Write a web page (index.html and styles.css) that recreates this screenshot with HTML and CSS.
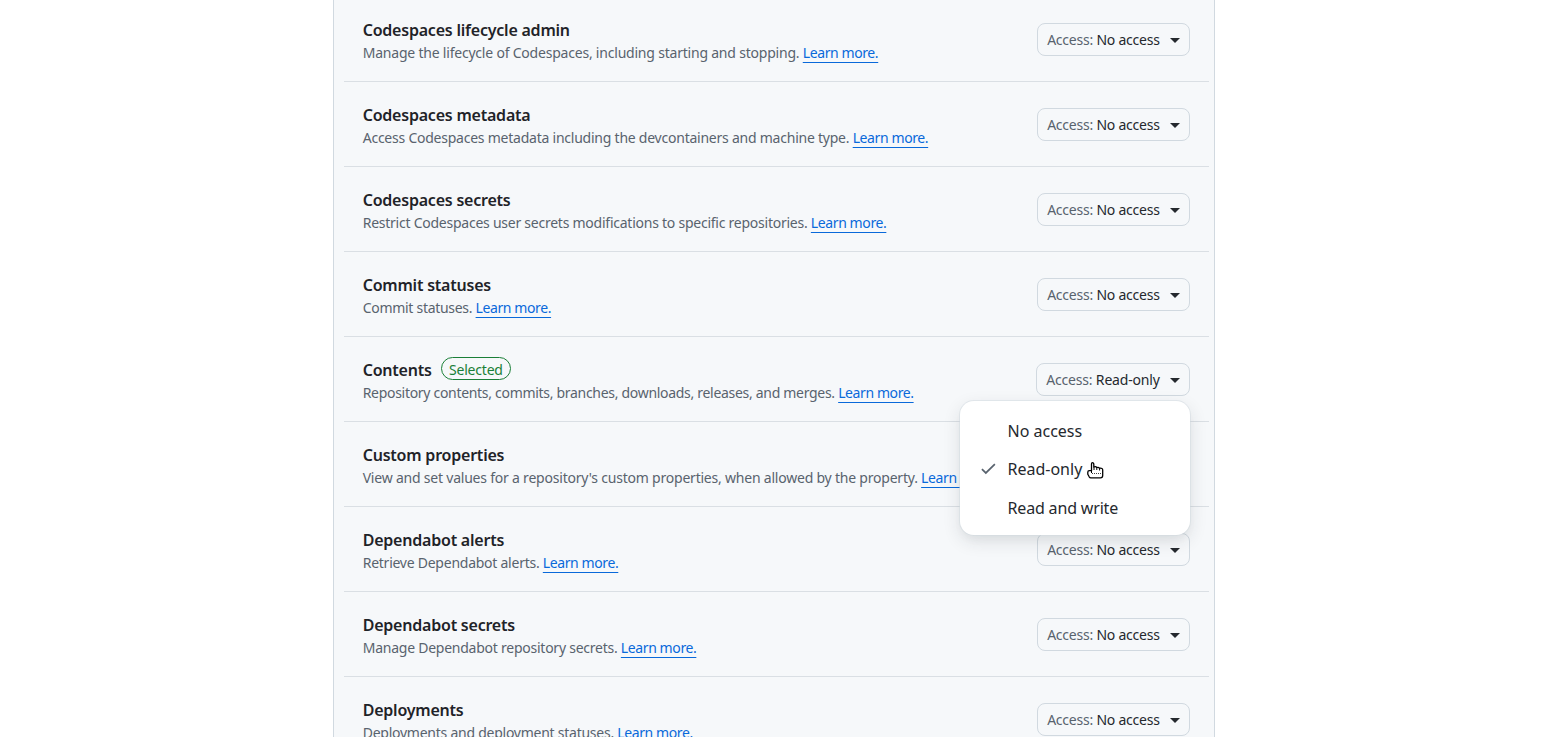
FILE: index.html
```html
<!DOCTYPE html>
<html lang="en">
<head>
<meta charset="utf-8">
<title>Repository permissions</title>
<link rel="stylesheet" href="styles.css">
</head>
<body>
<main class="panel" id="panel"></main>
<script src="app.js"></script>
</body>
</html>
```

FILE: styles.css
```css
* { box-sizing: border-box; }
body { margin: 0; height: 737px; overflow: hidden; background: #fff; color: #1f2328; font-family: "Noto Sans", sans-serif; font-size: 14px; line-height: 21px; }
.panel { width: 882px; height: 737px; margin-left: 333px; padding: 0 5px 0 10px; background: #f6f8fa; border: solid #d1d9e0; border-width: 0 1px; overflow: hidden; }
.row { position: relative; display: flex; justify-content: space-between; height: 85px; padding: 22px 19px 0 18.7px; border-bottom: 1px solid #dadfe4; }
.row:first-child { height: 82px; padding-top: 19px; }
.heading { display: flex; align-items: center; gap: 9.3px; height: 23px; }
.title { font-size: 16px; font-weight: 600; letter-spacing: -0.22px; }
.label { height: 23px; margin-top: -4px; padding: 0 7px; border: 1px solid #1a7f37; border-radius: 12px; color: #1a7f37; letter-spacing: -0.2px; line-height: 23px; }
.description { height: 23px; line-height: 21px; color: #59636e; white-space: nowrap; }
.link { color: #0969da; letter-spacing: -0.4px; text-decoration: underline; text-decoration-thickness: 1px; text-underline-offset: 4px; }
.button { display: flex; align-items: center; height: 33px; margin-top: 4px; padding: 0 9.3px 0 9px; border: 1px solid #d1d9e0; border-radius: 8px; background: #f6f8fa; color: #25292e; letter-spacing: -0.23px; white-space: pre; }
.button-selected { letter-spacing: -0.18px; }
.muted { color: #59636e; }
.caret { margin: 2px 0 0 10px; border: solid transparent; border-width: 5px 5px 0; border-top-color: #25292e; }
.menu { position: absolute; z-index: 2; right: 19px; top: 64px; width: 230px; height: 134px; padding: 11px 8px; border-radius: 14px; background: #fff; color: #25292e; box-shadow: 0 0 0 1px #d1d9e080, 0 6px 12px -3px #25292e0a, 0 6px 18px #25292e1f; }
.option { display: grid; grid-template-columns: 39.5px 1fr; height: 38.4px; align-items: center; font-size: 16px; letter-spacing: 0; }
.option:last-of-type { padding-top: 1px; letter-spacing: -0.17px; }
.check { width: 17px; margin: -2px 0 0 12px; }
.cursor { position: absolute; left: 126px; top: 60px; width: 19px; height: 19px; }
```

FILE: app.js
```js
// Each entry: title, description, description tracking in pixels.
const permissions = [
 ["Codespaces lifecycle admin","Manage the lifecycle of Codespaces, including starting and stopping.",-0.21],
 ["Codespaces metadata","Access Codespaces metadata including the devcontainers and machine type.",-0.235],
 ["Codespaces secrets","Restrict Codespaces user secrets modifications to specific repositories.",-0.245],
 ["Commit statuses","Commit statuses.",-0.29],
 ["Contents","Repository contents, commits, branches, downloads, releases, and merges.",-0.3],
 ["Custom properties","View and set values for a repository's custom properties, when allowed by the property.",-0.214],
 ["Dependabot alerts","Retrieve Dependabot alerts.",-0.25],
 ["Dependabot secrets","Manage Dependabot repository secrets.",-0.245],
 ["Deployments","Deployments and deployment statuses.",-0.25]
];
const menu = `<div class="menu"><div class="option"><span></span>No access</div><div class="option"><svg class="check" viewBox="0 0 16 16"><path d="M1.8 8.5l3.7 3.7L14 3.8" fill="none" stroke="#59636e" stroke-width="1.6"/></svg>Read-only</div><div class="option"><span></span>Read and write</div><svg class="cursor" viewBox="0 0 19 19"><path d="M5.5 10V3Q5.5 1.6 6.5 1.6T7.8 3V6Q10 5.2 10.7 6.5Q12.8 5.9 13.5 7.3Q16.7 6.8 16.7 9V14.5Q16.7 16.8 14.5 16.8H4.8Q3.8 16.8 3.2 15.8L1.8 13.2V11.2Q1.8 9.7 3.2 9.7H5.5" fill="#fff" stroke="#000" stroke-width="1.3" stroke-linejoin="round"/><path d="M5.5 9V12M8 6V9M10.8 6.5V9M13.6 7.3V9.5" fill="none" stroke="#000"/><path d="M6 12.5H15" fill="none" stroke="#444" stroke-dasharray="1 1"/></svg></div>`;
document.getElementById("panel").innerHTML = permissions.map(([title, description, tracking]) => {
 const selected = title === "Contents";
 return `<section class="row"><div><div class="heading"><span class="title">${title}</span>${selected ? '<span class="label">Selected</span>' : ''}</div><div class="description" style="letter-spacing:${tracking}px">${description} <a class="link">Learn more.</a></div></div><div class="button${selected ? ' button-selected' : ''}"><span class="muted">Access: </span>${selected ? 'Read-only' : 'No access'}<span class="caret"></span></div>${selected ? menu : ''}</section>`;
}).join("");
```
